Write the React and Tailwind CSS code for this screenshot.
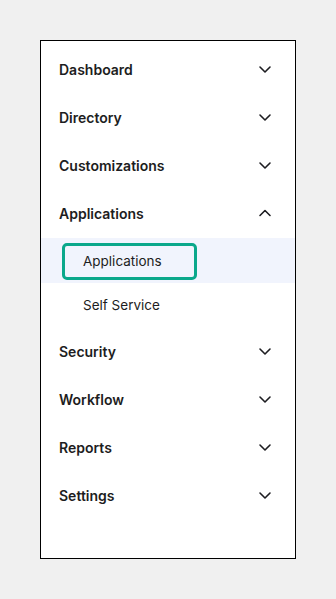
import React from "react";

function Chevron({ up }) {
  return (
    <svg width="16" height="16" viewBox="0 0 16 16" fill="none" className="shrink-0">
      <path
        d={up ? "M3 10.5L8 5.5L13 10.5" : "M3 6L8 11L13 6"}
        stroke="#1d1d21"
        strokeWidth="1.6"
        strokeLinecap="round"
        strokeLinejoin="round"
      />
    </svg>
  );
}

function Header({ label, up }) {
  return (
    <div className="flex h-[48px] items-center justify-between pb-[2px] pl-[18px] pr-[22px]">
      <span className="text-[14px] font-semibold text-[#1d1d21]">{label}</span>
      <Chevron up={up} />
    </div>
  );
}

export default function App() {
  const before = ["Dashboard", "Directory", "Customizations"];
  const after = ["Security", "Workflow", "Reports", "Settings"];
  return (
    <div
      className="min-h-[599px] w-[336px] bg-[#f0f0f0] pt-[40px] pl-[40px]"
      style={{ fontFamily: "Inter, 'Liberation Sans', sans-serif" }}
    >
      <div className="flex h-[519px] w-[256px] flex-col border border-black bg-white pt-[5px]">
        {before.map((l) => (
          <Header key={l} label={l} />
        ))}
        <Header label="Applications" up />
        <div className="flex h-[45px] items-center bg-[#f1f4fd] pl-[21px] pt-[1px]">
          <div className="flex h-[37px] w-[135px] items-center rounded-[5px] border-[3px] border-[#0aa88b] pl-[18px]">
            <span className="text-[13.5px] text-[#1d1d21]">Applications</span>
          </div>
        </div>
        <div className="flex h-[45px] items-center pb-[1px] pl-[42px]">
          <span className="text-[13.5px] text-[#1d1d21]">Self Service</span>
        </div>
        {after.map((l) => (
          <Header key={l} label={l} />
        ))}
      </div>
    </div>
  );
}
